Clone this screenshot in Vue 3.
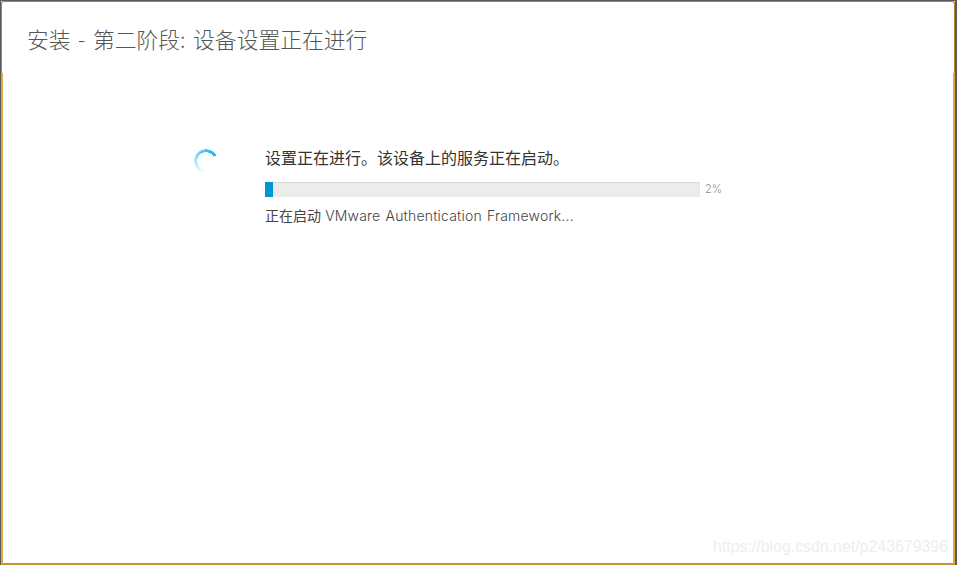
<script setup>
const progress = 2
const trackWidth = 435
const fillWidth = Math.floor(trackWidth * progress / 100)
const title = '安装 - 第二阶段: 设备设置正在进行'
const message = '设置正在进行。该设备上的服务正在启动。'
</script>

<template>
  <div class="desktop">
    <div class="wizard">
      <header class="wizard-header">
        <h1 class="wizard-title">{{ title }}</h1>
      </header>
      <main class="wizard-body">
        <div class="spinner-col">
          <div class="spinner"></div>
        </div>
        <div class="status">
          <p class="status-msg">{{ message }}</p>
          <div class="progress-row">
            <div class="progress-track">
              <div class="progress-fill" :style="{ width: fillWidth + 'px' }"></div>
            </div>
            <span class="progress-label">{{ progress }}%</span>
          </div>
          <p class="status-detail">正在启动 <span class="latin">VMware Authentication Framework...</span></p>
        </div>
      </main>
      <span class="watermark">https://blog.csdn.net/p243679396</span>
    </div>
  </div>
</template>

<style>
html,
body {
  margin: 0;
  padding: 0;
  overflow: hidden;
}
</style>

<style scoped>
.desktop {
  width: 957px;
  height: 565px;
  background: #5a5a5a;
  padding: 1px 2px 0 1px;
  box-sizing: border-box;
  font-family: "Inter", "Noto Sans CJK SC", sans-serif;
}

.wizard {
  position: relative;
  height: 100%;
  background: #fff;
  display: flex;
  flex-direction: column;
}

.wizard-header {
  height: 72px;
  padding: 22px 0 0 25px;
  box-sizing: border-box;
  border: solid #b3822a;
  border-width: 1px 1px 0;
  border-radius: 3px 3px 0 0;
}

.wizard-title {
  margin: 0;
  font-family: "Noto Sans CJK SC", sans-serif;
  font-size: 21.8px;
  font-weight: 300;
  line-height: 30px;
  word-spacing: 2.7px;
  color: #555;
  white-space: nowrap;
}

.wizard-body {
  flex: 1;
  display: flex;
  padding: 73px 0 0 191px;
  border: solid #e0a93f;
  border-width: 0 2px;
  border-bottom: 2px solid #c4922f;
}

.spinner-col {
  width: 71px;
  padding-top: 3px;
}

.spinner {
  width: 24px;
  height: 24px;
  border-radius: 50%;
  background: conic-gradient(from 180deg, rgba(45, 189, 240, 0) 0deg, rgba(45, 189, 240, 0.3) 70deg, #2dbdf0 200deg, #1fb6ee 240deg, rgba(45, 189, 240, 0) 241deg);
  -webkit-mask: radial-gradient(circle, transparent 8.5px, #000 9px, #000 11.5px, transparent 12px);
  mask: radial-gradient(circle, transparent 8.5px, #000 9px, #000 11.5px, transparent 12px);
}

.status {
  width: 470px;
}

.status-msg {
  margin: 0;
  font-family: "Noto Sans CJK SC", sans-serif;
  font-size: 16px;
  line-height: 22px;
  color: #333;
  white-space: nowrap;
}

.progress-row {
  display: flex;
  align-items: center;
  margin-top: 14px;
  gap: 5px;
}

.progress-track {
  width: 435px;
  height: 15px;
  background: #ececec;
  box-shadow: inset 0 1px 1px #d8d8d8;
}

.progress-fill {
  height: 100%;
  background: #0095d3;
}

.progress-label {
  font-size: 11px;
  font-weight: 300;
  line-height: 15px;
  color: #8c8c8c;
}

.status-detail {
  margin: 8px 0 0;
  font-family: "Noto Sans CJK SC", sans-serif;
  font-size: 14px;
  line-height: 20px;
  word-spacing: 1px;
  color: #444;
  white-space: nowrap;
}

.latin {
  font-family: "Inter", sans-serif;
  font-size: 14px;
  font-weight: 300;
  letter-spacing: 0.2px;
  color: #444;
}

.watermark {
  position: absolute;
  right: 7px;
  bottom: 9px;
  font-family: "Liberation Sans", sans-serif;
  font-size: 15.9px;
  line-height: 18px;
  color: #eeeeee;
  white-space: nowrap;
}
</style>
